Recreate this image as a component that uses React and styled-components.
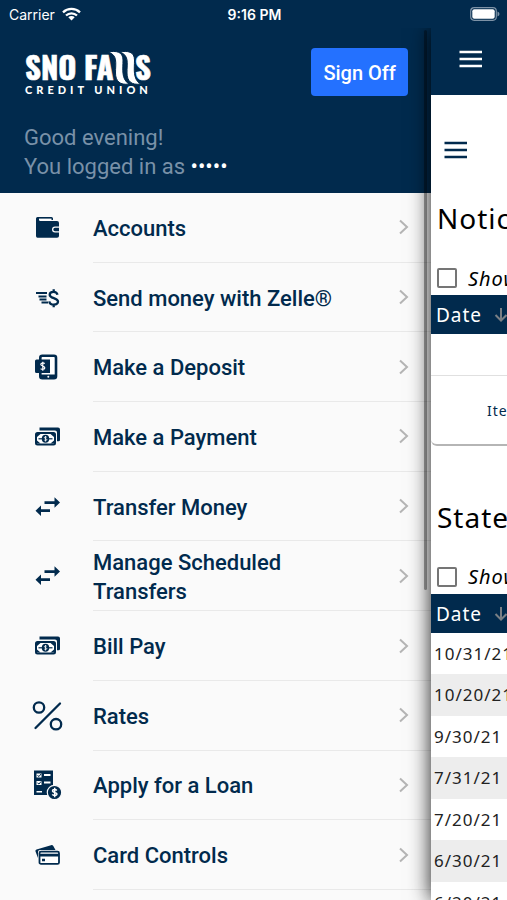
import React from 'react';
import styled, { createGlobalStyle } from 'styled-components';

const color = {
  navy: '#012a4d',
  blue: '#2471ff',
  muted: '#7991a8',
  line: '#e9e9e9',
  drawer: '#fafafa',
  stripe: '#ededed'
};

const menu = [
  { label: 'Accounts', icon: 'wallet' },
  { label: 'Send money with Zelle®', icon: 'zelle' },
  { label: 'Make a Deposit', icon: 'deposit' },
  { label: 'Make a Payment', icon: 'cash' },
  { label: 'Transfer Money', icon: 'transfer' },
  { label: 'Manage Scheduled Transfers', icon: 'transfer' },
  { label: 'Bill Pay', icon: 'cash' },
  { label: 'Rates', icon: 'percent' },
  { label: 'Apply for a Loan', icon: 'loan' },
  { label: 'Card Controls', icon: 'cards' }
];

const statements = ['10/31/21', '10/20/21', '9/30/21', '7/31/21', '7/20/21', '6/30/21', '6/20/21'];

const icons = {
  wallet: (
    <>
      <path fill={color.navy} d="M6.5 5H20.500q1.500 0 1.500 1.500V8H8.500V9H26q2 0 2 2v3.500h-4a3 3 0 0 0 0 6h4V24q0 1.700-2 1.700H6.500Q5 25.700 5 24V6.500Q5 5 6.500 5Z" />
      <path fill="#fff" d="M8 6.600H20.500V8.300H8Z" />
      <path fill={color.navy} d="M24 15.800h4v3.400h-4a1.700 1.700 0 0 1 0-3.400Z" />
    </>
  ),
  zelle: (
    <g fill="none" stroke={color.navy} strokeWidth="1.800">
      <path d="M5 11H16M7.500 14.500H15.500M8.500 17.500H15.500M10.500 20.500H17" />
      <path strokeWidth="2.300" d="M26.500 12.800C26 10.500 24.500 9.800 22.500 9.800c-2.300 0-3.800 1.200-3.800 2.900 0 4.200 8.300 2.600 8.300 6.900 0 1.900-1.700 3-4.200 3-2.400 0-4.200-1-4.500-3.300M22.700 7.200V10M22.700 22.500V25.200" />
    </g>
  ),
  deposit: (
    <>
      <rect x="9.300" y="4.700" width="15.700" height="22.600" rx="2" fill="#fff" stroke={color.navy} strokeWidth="2.600" />
      <path fill={color.navy} d="M9 23.500H25V28H9ZM4 10q0-1.500 1.500-1.500H19V22H5.500Q4 22 4 20.500Z" />
      <path fill="none" stroke="#fff" strokeWidth="1.200" d="M13.800 12.500c-2-1-4-.500-4 1s4 1.500 4 3.200-2.300 2-4.200 1M11.800 10.800v9" />
      <circle cx="17.300" cy="25.700" r="1" fill="#fff" />
    </>
  ),
  cash: (
    <>
      <path fill={color.navy} d="M8.500 6.500H27q2 0 2 2V19q0 1.200-1.500 1.200H26V11.500Q26 9.500 24 9.500H8.500Z" />
      <rect x="5" y="12" width="19" height="11.500" rx="1.500" fill="#fff" stroke={color.navy} strokeWidth="2" />
      <path fill={color.navy} d="M6 13h3.500L6 16ZM23 13h-3.500L23 16ZM6 22.500h3.500L6 19.500ZM23 22.500h-3.500L23 19.500Z" />
      <path stroke={color.navy} strokeWidth="1.200" d="M7.500 17.800H21.500" />
      <ellipse cx="14.500" cy="17.800" rx="3.700" ry="4" fill={color.navy} />
      <path fill="none" stroke="#fff" strokeWidth=".800" d="M15.700 16.200c-1-.600-2.300-.400-2.300.500s2.400.900 2.400 1.900-1.500 1.100-2.500.500M14.500 15v5.500" />
    </>
  ),
  transfer: (
    <path fill={color.navy} d="M13.500 10.300H23.500V6.300L29 11.500 23.500 16.700V12.900H13.500ZM19 18.300H10V14.600L4.500 19.700 10 24.900V21H19Z" />
  ),
  percent: (
    <g fill="none" stroke={color.navy} strokeWidth="2.300" strokeLinecap="round">
      <circle cx="8" cy="7.500" r="5.200" />
      <circle cx="25" cy="24.200" r="5.200" />
      <path d="M29 3.500 4.500 28" />
    </g>
  ),
  loan: (
    <>
      <path fill={color.navy} d="M3 1.500H22V26H3Z" />
      <path fill="#fff" d="M5.500 4.500h5v4h-5ZM13 5h6.500v2H13ZM5.500 12h5v4h-5ZM13 12.500h6.500v2H13ZM5.500 22h5.500v1.500H5.500Z" />
      <path fill="none" stroke={color.navy} d="M6.500 6.500 8 7.500 10 5M6.500 14 8 15 10 12.500" />
      <circle cx="23.500" cy="23.500" r="7.200" fill={color.navy} stroke={color.drawer} strokeWidth="1.200" />
      <path fill="none" stroke="#fff" strokeWidth="1.500" d="M25.800 21.500c-1-1.300-4.300-1.200-4.300.400 0 1.900 4.500 1.100 4.500 3.200 0 1.800-3.700 1.900-4.700.300M23.700 18.800v9.400" />
    </>
  ),
  cards: (
    <>
      <path fill={color.navy} d="M4.500 12.500q-.500-1.500 1-2L20 6.200q1.500-.500 2.300.900L24.500 11H9q-2 0-2 2v6Z" />
      <rect x="8.500" y="12.700" width="19.500" height="12.200" rx="1.500" fill="#fff" stroke={color.navy} strokeWidth="1.800" />
      <path fill={color.navy} d="M8.500 14.700H28V17.500H8.500ZM11 19.800h3v2.500h-3Z" />
    </>
  )
};

const MenuIcon = ({ name }) => (
  <svg width="32" height="32" viewBox="0 0 32 32" aria-hidden="true">{icons[name]}</svg>
);

const Logo = () => (
  <svg width="128" height="46" viewBox="0 0 128 46" role="img" aria-label="Sno Falls Credit Union">
    <g fill="#fff" stroke="#fff" strokeWidth=".600" fontFamily="Oswald, 'Open Sans Condensed', 'Liberation Sans', sans-serif" fontWeight="700" fontSize="31">
      <text x="1" y="31">SNO</text>
      <text x="60" y="31">FA</text>
      <text x="111" y="31">S</text>
    </g>
    <g fill="#fff" stroke={color.navy} strokeWidth="1">
      <path d="M84 3C92 1.500 99 2.500 99 11 99 20 97 30 105 35 96 36.500 91.500 32 91.500 24 91.500 14 94 6 84 3Z" />
      <path d="M95.500 3C103.500 1.500 110.500 2.500 110.500 11 110.500 20 108.500 30 116.500 35 107.500 36.500 103 32 103 24 103 14 105.500 6 95.500 3Z" />
    </g>
    <text x="1" y="45" fill="#fff" fontFamily="Lato, sans-serif" fontWeight="900" fontSize="11" letterSpacing="4">CREDIT UNION</text>
  </svg>
);

const Chevron = () => (
  <svg width="12" height="16" viewBox="0 0 12 16" aria-hidden="true">
    <path d="M2 1.500 9 8 2 14.500" fill="none" stroke="#b5b5b5" strokeWidth="2" />
  </svg>
);

const Bars = () => (
  <svg width="24" height="18" viewBox="0 0 24 18" aria-hidden="true">
    <path d="M.5 2H23M.5 9H23M.5 16H23" stroke="currentColor" strokeWidth="2.500" />
  </svg>
);

const SortArrow = () => (
  <svg width="14" height="14" viewBox="0 0 14 14" aria-hidden="true">
    <path d="M7 0V12.500M1.500 7 7 12.500 12.500 7" fill="none" stroke="#7a7f85" strokeWidth="2" />
  </svg>
);

const App = () => (
  <>
    <GlobalStyle />
    <Screen>
      <StatusBar>
        <Carrier>
          Carrier
          <svg width="19" height="14" viewBox="0 0 19 14" aria-hidden="true">
            <g fill="none" stroke="#fff" strokeWidth="2.300">
              <path d="M1 5.300a12.300 12.300 0 0 1 17 0" />
              <path d="M4 8.500a8 8 0 0 1 11 0" />
            </g>
            <path fill="#fff" d="M9.500 13.500 6.300 10.200a4.600 4.600 0 0 1 6.400 0Z" />
          </svg>
        </Carrier>
        <Time>9:16 PM</Time>
        <Battery>
          <svg width="30" height="14" viewBox="0 0 30 14" aria-hidden="true">
            <rect x=".700" y=".700" width="25.600" height="12.600" rx="3.500" fill="none" stroke="#7d92a6" strokeWidth="1.200" />
            <rect x="2.300" y="2.300" width="22.400" height="9.400" rx="2" fill="#fff" />
            <path fill="#7d92a6" d="M27.500 4.500q2 .800 2 2.500t-2 2.500Z" />
          </svg>
        </Battery>
      </StatusBar>
      <Body>
        <Drawer>
          <DrawerHeader>
            <Brand>
              <Logo />
              <SignOff type="button">Sign Off</SignOff>
            </Brand>
            <Greeting>
              Good evening!<br />
              You logged in as <Masked>•••••</Masked>
            </Greeting>
          </DrawerHeader>
          <Menu>
            {menu.map(({ label, icon }) => (
              <MenuItem key={label}>
                <MenuLink href="#">
                  <MenuIcon name={icon} />
                  <MenuText>
                    <MenuLabel>{label}</MenuLabel>
                    <Chevron />
                  </MenuText>
                </MenuLink>
              </MenuItem>
            ))}
          </Menu>
          <ScrollThumb />
        </Drawer>
        <Page>
          <PageHeader>
            <IconButton type="button" aria-label="Open menu"><Bars /></IconButton>
          </PageHeader>
          <PageTools>
            <IconButton type="button" aria-label="Document menu" $dark><Bars /></IconButton>
          </PageTools>
          <Section>
            <Title>Notices</Title>
            <ShowLabel><Check type="checkbox" />Show</ShowLabel>
            <Table>
              <thead>
                <tr><HeadCell>Date <SortArrow /></HeadCell></tr>
              </thead>
              <tbody>
                <tr><EmptyCell /></tr>
              </tbody>
            </Table>
            <Pager>Items</Pager>
          </Section>
          <Section>
            <Title>Statements</Title>
            <ShowLabel><Check type="checkbox" />Show</ShowLabel>
            <Table>
              <thead>
                <tr><HeadCell>Date <SortArrow /></HeadCell></tr>
              </thead>
              <tbody>
                {statements.map((date) => (
                  <Row key={date}><Cell>{date}</Cell></Row>
                ))}
              </tbody>
            </Table>
          </Section>
        </Page>
      </Body>
    </Screen>
  </>
);

const GlobalStyle = createGlobalStyle`
  * {
    box-sizing: border-box;
  }

  body {
    margin: 0;
    background: ${color.drawer};
    font-family: Roboto, sans-serif;
  }
`;

const Screen = styled.div`
  display: flex;
  flex-direction: column;
  height: 100vh;
  overflow: hidden;
`;

const StatusBar = styled.header`
  display: grid;
  grid-template-columns: 1fr auto 1fr;
  align-items: center;
  height: 28px;
  padding: 0 7px 0 9px;
  background: ${color.navy};
  color: #fff;
  font-family: Inter, sans-serif;
  font-size: 14px;
`;

const Carrier = styled.span`
  display: flex;
  align-items: center;
  gap: 7px;
`;

const Time = styled.time`
  font-weight: 600;
`;

const Battery = styled.span`
  display: flex;
  justify-content: flex-end;
`;

const Body = styled.div`
  display: flex;
  flex: 1;
  min-height: 0;
  overflow: hidden;
`;

const Drawer = styled.aside`
  position: relative;
  display: flex;
  flex: 0 0 85%;
  flex-direction: column;
  background: ${color.drawer};
`;

const DrawerHeader = styled.div`
  padding: 20px 23px 12px 24px;
  background: ${color.navy};
`;

const Brand = styled.div`
  display: flex;
  align-items: center;
  justify-content: space-between;
`;

const SignOff = styled.button`
  height: 48px;
  padding: 2px 12px 0;
  border: 0;
  border-radius: 4px;
  background: ${color.blue};
  color: #fff;
  font-family: inherit;
  font-size: 20px;
  font-weight: 500;
  line-height: 24px;
  cursor: pointer;
`;

const Greeting = styled.p`
  margin: 27px 0 0;
  color: ${color.muted};
  font-size: 22px;
  line-height: 29px;
`;

const Masked = styled.span`
  color: #fff;
`;

const Menu = styled.ul`
  display: grid;
  flex: 1;
  grid-auto-rows: 1fr;
  margin: 0;
  padding: 0 0 10px;
  list-style: none;
`;

const MenuItem = styled.li`
  display: flex;
`;

const MenuLink = styled.a`
  display: flex;
  flex: 1;
  align-items: center;
  gap: 30px;
  padding-left: 31px;
  color: ${color.navy};
  text-decoration: none;
`;

const MenuText = styled.span`
  display: flex;
  flex: 1;
  align-items: center;
  align-self: stretch;
  justify-content: space-between;
  padding-right: 21px;
  border-bottom: 1px solid ${color.line};
`;

const MenuLabel = styled.span`
  max-width: 260px;
  padding-top: 2px;
  font-size: 22px;
  font-weight: 500;
  line-height: 29px;
`;

const ScrollThumb = styled.div`
  position: absolute;
  top: 2px;
  right: 4px;
  width: 3px;
  height: 560px;
  border-radius: 2px;
  background: rgba(0, 0, 0, 0.35);
`;

const Page = styled.main`
  z-index: 1;
  flex: 1;
  min-width: 0;
  background: #fff;
  box-shadow: 0 0 20px rgba(0, 0, 0, 0.9);
  font-family: 'Noto Sans', sans-serif;
  letter-spacing: 1px;
  white-space: nowrap;
`;

const PageHeader = styled.div`
  display: flex;
  justify-content: flex-end;
  height: 67px;
  padding: 22px 24px 0 0;
  background: ${color.navy};
`;

const PageTools = styled.div`
  padding: 46px 13px 0;
`;

const IconButton = styled.button`
  display: block;
  height: 18px;
  padding: 0;
  border: 0;
  background: none;
  color: ${props => props.$dark ? color.navy : '#fff'};
  cursor: pointer;
`;

const Section = styled.section`
  margin-bottom: 52px;
  overflow: hidden;

  ${PageTools} + & {
    margin-top: 40px;
  }
`;

const Title = styled.h2`
  margin: 0 0 30px;
  padding-left: 6px;
  color: #000;
  font-size: 28px;
  font-weight: 400;
  line-height: 39px;
`;

const ShowLabel = styled.label`
  display: flex;
  align-items: center;
  gap: 11px;
  height: 20px;
  margin-bottom: 7px;
  padding-left: 6px;
  font-size: 20px;
  font-style: italic;
`;

const Check = styled.input`
  flex: none;
  width: 20px;
  height: 20px;
  margin: 0;
  border: 2px solid #757575;
  border-radius: 2px;
  background: #fff;
  appearance: none;
`;

const Table = styled.table`
  width: 100%;
  border-collapse: collapse;
`;

const HeadCell = styled.th`
  height: 39px;
  padding: 1px 5px 0;
  background: ${color.navy};
  color: #fff;
  font-size: 19px;
  font-weight: 400;
  text-align: left;

  svg {
    margin-left: 6px;
  }
`;

const EmptyCell = styled.td`
  height: 41px;
  padding: 0;
  border-bottom: 1px solid #e0e0e0;
`;

const Pager = styled.div`
  height: 70px;
  padding-left: 56px;
  border-bottom: 2px solid #b5b5b5;
  border-bottom-left-radius: 6px;
  color: ${color.navy};
  font-size: 14px;
  line-height: 69px;
`;

const Row = styled.tr`
  height: 41px;

  &:nth-child(even) {
    height: 42px;
    background: ${color.stripe};
  }
`;

const Cell = styled.td`
  padding: 0 3px;
  color: #222;
  font-size: 17px;
`;

export default App;
